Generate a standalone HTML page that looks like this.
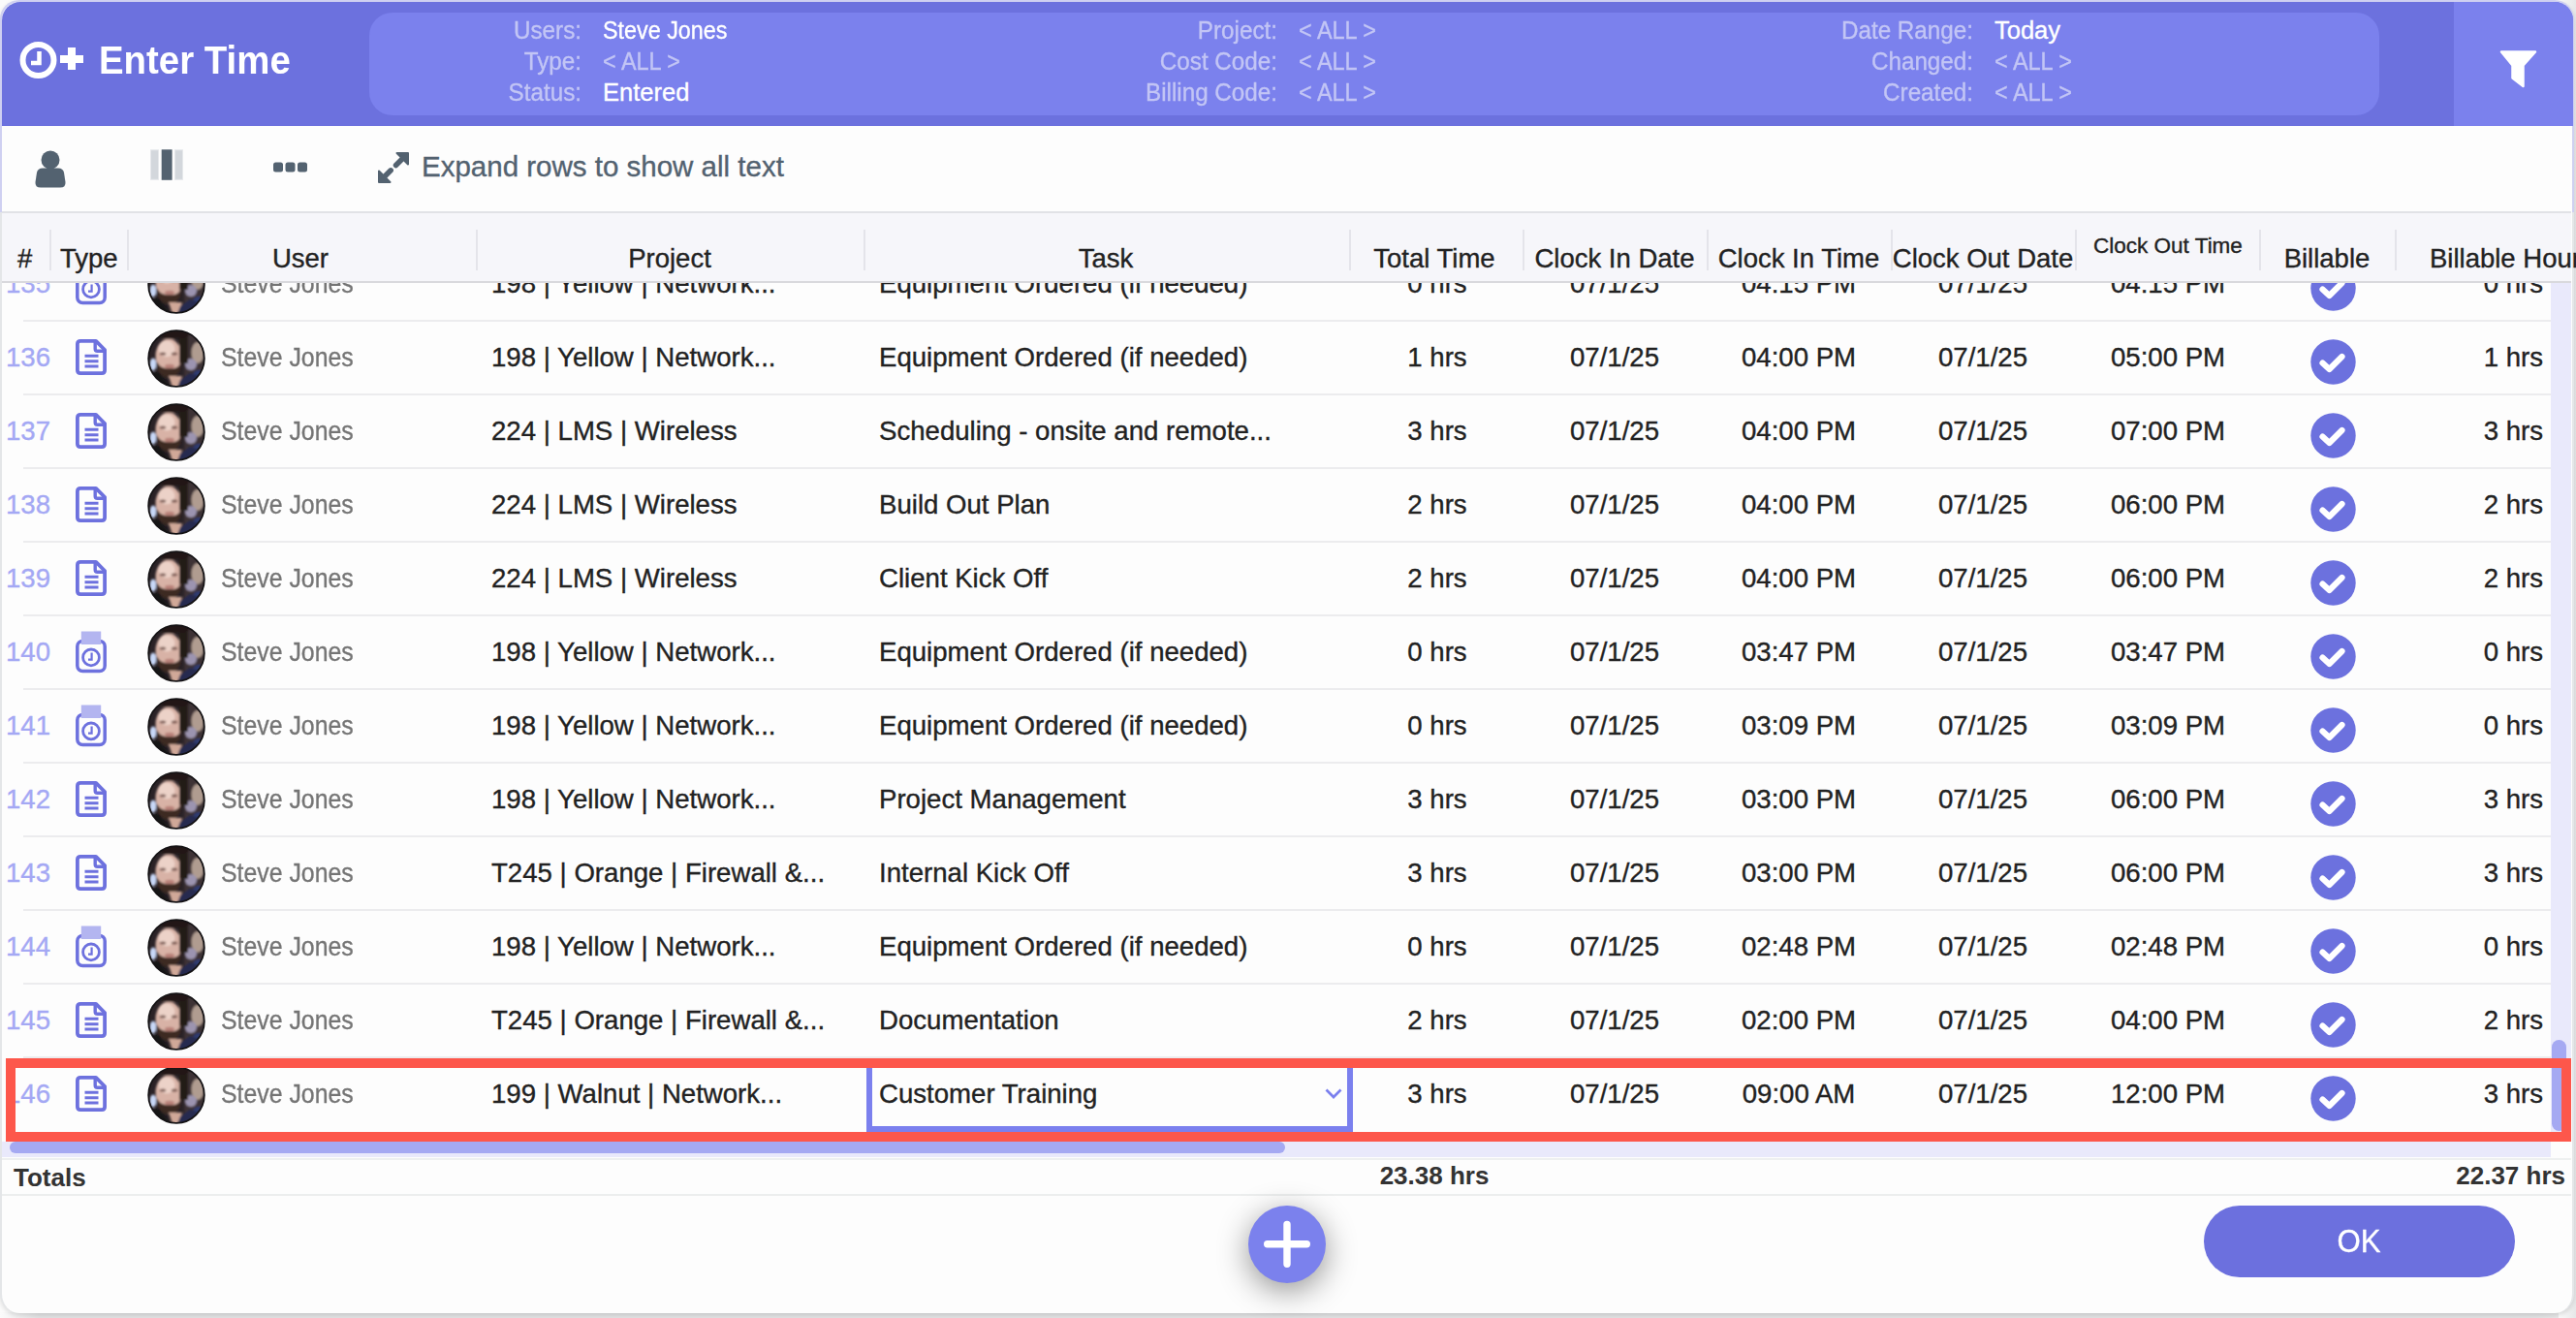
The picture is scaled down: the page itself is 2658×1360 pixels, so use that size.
<!DOCTYPE html><html><head><meta charset="utf-8"><style>
*{margin:0;padding:0;box-sizing:border-box}
html,body{width:2658px;height:1360px;overflow:hidden;background:#fbfbfb;font-family:"Liberation Sans",sans-serif}
.t{position:absolute;line-height:1;white-space:nowrap;-webkit-text-stroke:0.35px currentColor}
.abs{position:absolute}
#win{position:absolute;left:0;top:0;width:2656px;height:1355px;background:#fdfdfd;border-radius:20px;overflow:hidden;border-left:2.5px solid #e4e6e8;border-right:2.5px solid #e4e6e8;box-shadow:0 2px 5px rgba(0,0,0,0.13)}
</style></head><body>
<div class="abs" style="left:0;top:1354px;width:2658px;height:6px;background:linear-gradient(90deg,#fbfbfb 0,#e1e2e3 40px,#e1e2e3 2618px,#ececec 2658px)"></div>
<div class="abs" style="left:2640px;top:0;width:18px;height:1360px;background:linear-gradient(90deg,#fbfbfb,#e6e7e8)"></div>
<div id="win"></div>
<div class="abs" style="left:0;top:0;width:2656px;height:219px;border:2px solid #cfd0f1;border-bottom:none;border-radius:20px 20px 0 0"></div>
<div class="abs" style="left:1.5px;top:1.5px;width:2653px;height:128.5px;background:#6c71de;border-radius:19px 19px 0 0"></div>
<div class="abs" style="left:381px;top:13px;width:2074px;height:106px;background:#7b81ed;border-radius:24px"></div>
<div class="abs" style="left:2532px;top:1.5px;width:123px;height:128.5px;background:#7b81ed;border-radius:0 19px 0 0"></div>
<svg class="abs" style="left:18px;top:40px" width="72" height="44" viewBox="0 0 72 44">
<circle cx="21.5" cy="22" r="16" fill="none" stroke="#fff" stroke-width="6"/>
<path d="M22.5 13 V25 H14" fill="none" stroke="#fff" stroke-width="4.5"/>
<path d="M56 9 V32 M44 21 H68" stroke="#fff" stroke-width="8"/>
</svg>
<div class="t" style="left:102px;top:42.1px;font-size:40px;color:#fff;font-weight:700;-webkit-text-stroke:0;transform:scaleX(0.96);transform-origin:0 0">Enter Time</div>
<div class="t" style="left:-1400px;width:2000px;text-align:right;top:19.2px;font-size:25.5px;color:#c2c5f5;font-weight:400;transform:scaleX(0.95);transform-origin:100% 0">Users:</div>
<div class="t" style="left:622px;top:19.2px;font-size:25.5px;color:#fff;font-weight:400;transform:scaleX(0.915);transform-origin:0 0">Steve Jones</div>
<div class="t" style="left:-1400px;width:2000px;text-align:right;top:51.0px;font-size:25.5px;color:#c2c5f5;font-weight:400;transform:scaleX(0.95);transform-origin:100% 0">Type:</div>
<div class="t" style="left:622px;top:51.0px;font-size:25.5px;color:#c2c5f5;font-weight:400;transform:scaleX(0.92);transform-origin:0 0">&lt; ALL &gt;</div>
<div class="t" style="left:-1400px;width:2000px;text-align:right;top:82.8px;font-size:25.5px;color:#c2c5f5;font-weight:400;transform:scaleX(0.95);transform-origin:100% 0">Status:</div>
<div class="t" style="left:622px;top:82.8px;font-size:25.5px;color:#fff;font-weight:400;transform:scaleX(1.0);transform-origin:0 0">Entered</div>
<div class="t" style="left:-682px;width:2000px;text-align:right;top:19.2px;font-size:25.5px;color:#c2c5f5;font-weight:400;transform:scaleX(0.95);transform-origin:100% 0">Project:</div>
<div class="t" style="left:1340px;top:19.2px;font-size:25.5px;color:#c2c5f5;font-weight:400;transform:scaleX(0.92);transform-origin:0 0">&lt; ALL &gt;</div>
<div class="t" style="left:-682px;width:2000px;text-align:right;top:51.0px;font-size:25.5px;color:#c2c5f5;font-weight:400;transform:scaleX(0.95);transform-origin:100% 0">Cost Code:</div>
<div class="t" style="left:1340px;top:51.0px;font-size:25.5px;color:#c2c5f5;font-weight:400;transform:scaleX(0.92);transform-origin:0 0">&lt; ALL &gt;</div>
<div class="t" style="left:-682px;width:2000px;text-align:right;top:82.8px;font-size:25.5px;color:#c2c5f5;font-weight:400;transform:scaleX(0.95);transform-origin:100% 0">Billing Code:</div>
<div class="t" style="left:1340px;top:82.8px;font-size:25.5px;color:#c2c5f5;font-weight:400;transform:scaleX(0.92);transform-origin:0 0">&lt; ALL &gt;</div>
<div class="t" style="left:36px;width:2000px;text-align:right;top:19.2px;font-size:25.5px;color:#c2c5f5;font-weight:400;transform:scaleX(0.95);transform-origin:100% 0">Date Range:</div>
<div class="t" style="left:2058px;top:19.2px;font-size:25.5px;color:#fff;font-weight:400;transform:scaleX(1.0);transform-origin:0 0">Today</div>
<div class="t" style="left:36px;width:2000px;text-align:right;top:51.0px;font-size:25.5px;color:#c2c5f5;font-weight:400;transform:scaleX(0.95);transform-origin:100% 0">Changed:</div>
<div class="t" style="left:2058px;top:51.0px;font-size:25.5px;color:#c2c5f5;font-weight:400;transform:scaleX(0.92);transform-origin:0 0">&lt; ALL &gt;</div>
<div class="t" style="left:36px;width:2000px;text-align:right;top:82.8px;font-size:25.5px;color:#c2c5f5;font-weight:400;transform:scaleX(0.95);transform-origin:100% 0">Created:</div>
<div class="t" style="left:2058px;top:82.8px;font-size:25.5px;color:#c2c5f5;font-weight:400;transform:scaleX(0.92);transform-origin:0 0">&lt; ALL &gt;</div>
<svg class="abs" style="left:2578px;top:50px" width="42" height="42" viewBox="0 0 42 42">
<path d="M3 3.5 H38 L25.5 17.5 V39 L14.5 30.5 V17.5 Z" fill="#fff" stroke="#fff" stroke-width="2.5" stroke-linejoin="round"/>
</svg>
<div class="abs" style="left:2px;top:218px;width:2651px;height:2px;background:#e1e2e6"></div>
<svg class="abs" style="left:34px;top:152px" width="36" height="44" viewBox="0 0 36 44">
<circle cx="18" cy="13" r="9.5" fill="#536270"/>
<path d="M4 26 Q5 21.5 10 21.5 H26 Q31 21.5 32 26 L33.5 36 Q34 41.5 28 41.5 H8 Q2 41.5 2.5 36 Z" fill="#536270"/>
</svg>
<svg class="abs" style="left:154px;top:153px" width="36" height="34" viewBox="0 0 36 34">
<rect x="1.5" y="1.8" width="8" height="30.5" fill="#d3d7dc" stroke="#e6e8eb" stroke-width="1"/>
<rect x="12.7" y="1.3" width="10.9" height="31.5" fill="#536270"/>
<rect x="26.5" y="1.8" width="8" height="30.5" fill="#d3d7dc" stroke="#e6e8eb" stroke-width="1"/>
</svg>
<svg class="abs" style="left:281px;top:166px" width="38" height="14" viewBox="0 0 38 14">
<rect x="1" y="1.5" width="10" height="10" rx="2.5" fill="#536270"/>
<rect x="13.5" y="1.5" width="10" height="10" rx="2.5" fill="#536270"/>
<rect x="26" y="1.5" width="10" height="10" rx="2.5" fill="#536270"/>
</svg>
<svg class="abs" style="left:388px;top:155px" width="36" height="36" viewBox="0 0 36 36">
<path d="M21.5 3 H33 V14.5 Z" fill="#536270" stroke="#536270" stroke-width="2" stroke-linejoin="round"/>
<path d="M3 21.5 V33 H14.5 Z" fill="#536270" stroke="#536270" stroke-width="2" stroke-linejoin="round"/>
<path d="M28 8 L20.5 15.5 M8 28 L15.2 20.8" stroke="#536270" stroke-width="5.5" stroke-linecap="round"/>
</svg>
<div class="t" style="left:435px;top:157.0px;font-size:29.5px;color:#536270;font-weight:400;">Expand rows to show all text</div>
<div class="abs" style="left:2px;top:220px;width:2651px;height:71px;background:#f6f6fa"></div>
<div class="abs" style="left:2px;top:290px;width:2651px;height:2px;background:#d9d9dd"></div>
<div class="abs" style="left:51px;top:237px;width:2px;height:42px;background:#e4e4ea"></div>
<div class="abs" style="left:131px;top:237px;width:2px;height:42px;background:#e4e4ea"></div>
<div class="abs" style="left:491px;top:237px;width:2px;height:42px;background:#e4e4ea"></div>
<div class="abs" style="left:891px;top:237px;width:2px;height:42px;background:#e4e4ea"></div>
<div class="abs" style="left:1392px;top:237px;width:2px;height:42px;background:#e4e4ea"></div>
<div class="abs" style="left:1571px;top:237px;width:2px;height:42px;background:#e4e4ea"></div>
<div class="abs" style="left:1761px;top:237px;width:2px;height:42px;background:#e4e4ea"></div>
<div class="abs" style="left:1951px;top:237px;width:2px;height:42px;background:#e4e4ea"></div>
<div class="abs" style="left:2141px;top:237px;width:2px;height:42px;background:#e4e4ea"></div>
<div class="abs" style="left:2331px;top:237px;width:2px;height:42px;background:#e4e4ea"></div>
<div class="abs" style="left:2471px;top:237px;width:2px;height:42px;background:#e4e4ea"></div>
<div class="t" style="left:18px;top:252.7px;font-size:27.5px;color:#222;font-weight:400;">#</div>
<div class="t" style="left:62px;top:252.7px;font-size:27.5px;color:#222;font-weight:400;">Type</div>
<div class="t" style="left:-690px;width:2000px;text-align:center;top:252.7px;font-size:27.5px;color:#222;font-weight:400;">User</div>
<div class="t" style="left:-309px;width:2000px;text-align:center;top:252.7px;font-size:27.5px;color:#222;font-weight:400;">Project</div>
<div class="t" style="left:141px;width:2000px;text-align:center;top:252.7px;font-size:27.5px;color:#222;font-weight:400;">Task</div>
<div class="t" style="left:480px;width:2000px;text-align:center;top:252.7px;font-size:27.5px;color:#222;font-weight:400;">Total Time</div>
<div class="t" style="left:666px;width:2000px;text-align:center;top:252.7px;font-size:27.5px;color:#222;font-weight:400;">Clock In Date</div>
<div class="t" style="left:856px;width:2000px;text-align:center;top:252.7px;font-size:27.5px;color:#222;font-weight:400;">Clock In Time</div>
<div class="t" style="left:1046px;width:2000px;text-align:center;top:252.7px;font-size:27.5px;color:#222;font-weight:400;">Clock Out Date</div>
<div class="t" style="left:1237px;width:2000px;text-align:center;top:243.0px;font-size:22.5px;color:#222;font-weight:400;">Clock Out Time</div>
<div class="t" style="left:1401px;width:2000px;text-align:center;top:252.7px;font-size:27.5px;color:#222;font-weight:400;">Billable</div>
<div class="t" style="left:2507px;top:252.7px;font-size:27.5px;color:#222;font-weight:400;">Billable Hours</div>
<svg width="0" height="0" style="position:absolute"><defs>
<clipPath id="avc"><circle cx="30" cy="30" r="28.6"/></clipPath>
<filter id="avb" x="-20%" y="-20%" width="140%" height="140%"><feGaussianBlur stdDeviation="1.3"/></filter>
<g id="av"><g clip-path="url(#avc)">
<rect x="0" y="0" width="60" height="60" fill="#2a2226"/>
<g filter="url(#avb)">
<rect x="38" y="0" width="22" height="60" fill="#3e3234"/>
<ellipse cx="52" cy="24" rx="6.5" ry="11" fill="#b09c90"/>
<ellipse cx="45" cy="36" rx="6" ry="6" fill="#9c94b0"/>
<ellipse cx="53" cy="47" rx="6" ry="5" fill="#2e3a70"/>
<ellipse cx="6" cy="36" rx="3.5" ry="6.5" fill="#c8d8f8"/>
<ellipse cx="22" cy="27" rx="13.5" ry="17.5" fill="#d8b2a6"/>
<ellipse cx="20" cy="20" rx="8.5" ry="8.5" fill="#ecd2c8"/>
<rect x="33" y="3" width="9" height="32" fill="#231a18"/>
<ellipse cx="16" cy="25" rx="3.2" ry="1.5" fill="#7a5a52"/>
<ellipse cx="28" cy="25" rx="3.2" ry="1.5" fill="#7a5a52"/>
<path d="M9 33 Q10 49 23 50 Q35 49 36 30 L34 36 Q31 41 23 40 Q14 41 11 35 Z" fill="#3c2a24"/>
<ellipse cx="23" cy="38" rx="5" ry="2.2" fill="#b88078"/>
<ellipse cx="26" cy="4" rx="18" ry="5.5" fill="#201818"/>
<path d="M22 48 L36 48 L32 60 L26 60 Z" fill="#d0a898"/>
<path d="M0 44 L12 44 L25 60 L0 60 Z" fill="#141218"/>
<path d="M34 52 L44 45 L60 50 L60 60 L31 60 Z" fill="#262c50"/>
</g></g>
<circle cx="30" cy="30" r="28.8" fill="none" stroke="#141214" stroke-width="1.8"/>
</g></defs></svg>
<div class="abs" style="left:2px;top:292px;width:2630px;height:886px;overflow:hidden">
<div class="abs" style="left:-2px;top:-292px;width:2658px;height:1360px">
<div class="t" style="left:-1948px;width:2000px;text-align:right;top:278.6px;font-size:27.6px;color:#a4a8f4;font-weight:400;">135</div>
<svg class="abs" style="left:78px;top:271px" width="32" height="44" viewBox="0 0 32 44">
<rect x="1.8" y="10.5" width="28.4" height="31" rx="5.5" fill="none" stroke="#6d71de" stroke-width="3.5"/>
<rect x="5.8" y="0.5" width="20.4" height="13.5" fill="#b3b5f0"/>
<circle cx="16" cy="27.4" r="8.4" fill="none" stroke="#6d71de" stroke-width="2.8"/>
<path d="M16.6 22.5 V29.6 H13" fill="none" stroke="#6d71de" stroke-width="2.2"/>
</svg>
<svg class="abs" style="left:152px;top:263.5px" width="60" height="60" viewBox="0 0 60 60"><use href="#av"/></svg>
<div class="t" style="left:228px;top:278.6px;font-size:27.6px;color:#757575;font-weight:400;transform:scaleX(0.9);transform-origin:0 0">Steve Jones</div>
<div class="t" style="left:507px;top:278.6px;font-size:27.6px;color:#222;font-weight:400;">198 | Yellow | Network...</div>
<div class="t" style="left:907px;top:278.6px;font-size:27.6px;color:#222;font-weight:400;">Equipment Ordered (if needed)</div>
<div class="t" style="left:483px;width:2000px;text-align:center;top:278.6px;font-size:27.6px;color:#222;font-weight:400;">0 hrs</div>
<div class="t" style="left:666px;width:2000px;text-align:center;top:278.6px;font-size:27.6px;color:#222;font-weight:400;">07/1/25</div>
<div class="t" style="left:856px;width:2000px;text-align:center;top:278.6px;font-size:27.6px;color:#222;font-weight:400;">04:15 PM</div>
<div class="t" style="left:1046px;width:2000px;text-align:center;top:278.6px;font-size:27.6px;color:#222;font-weight:400;">07/1/25</div>
<div class="t" style="left:1237px;width:2000px;text-align:center;top:278.6px;font-size:27.6px;color:#222;font-weight:400;">04:15 PM</div>
<svg class="abs" style="left:2384px;top:273.5px" width="47" height="47" viewBox="0 0 47 47">
<circle cx="23.5" cy="23.5" r="23.2" fill="#6c71de"/>
<path d="M12.5 24.5 L19.5 31 L32.5 18" fill="none" stroke="#fff" stroke-width="6.2" stroke-linecap="round" stroke-linejoin="round"/>
</svg>
<div class="t" style="left:624px;width:2000px;text-align:right;top:278.6px;font-size:27.6px;color:#222;font-weight:400;">0 hrs</div>
<div class="abs" style="left:24px;top:330px;width:2608px;height:2px;background:#ececee"></div>
<div class="t" style="left:-1948px;width:2000px;text-align:right;top:354.6px;font-size:27.6px;color:#a4a8f4;font-weight:400;">136</div>
<svg class="abs" style="left:78px;top:350px" width="32" height="38" viewBox="0 0 32 38">
<path d="M1.9 5 Q1.9 1.9 5 1.9 H21 L30.1 11 V32 Q30.1 35.2 27 35.2 H5 Q1.9 35.2 1.9 32 Z" fill="none" stroke="#6d71de" stroke-width="3.8" stroke-linejoin="round"/>
<path d="M20.2 2.5 V10 Q20.2 12.3 22.5 12.3 H29.5" fill="none" stroke="#6d71de" stroke-width="3.4"/>
<path d="M9.5 17.3 H23.5 M9.5 22.8 H23.5 M9.5 28 H23.5" stroke="#6d71de" stroke-width="3"/>
</svg>
<svg class="abs" style="left:152px;top:339.5px" width="60" height="60" viewBox="0 0 60 60"><use href="#av"/></svg>
<div class="t" style="left:228px;top:354.6px;font-size:27.6px;color:#757575;font-weight:400;transform:scaleX(0.9);transform-origin:0 0">Steve Jones</div>
<div class="t" style="left:507px;top:354.6px;font-size:27.6px;color:#222;font-weight:400;">198 | Yellow | Network...</div>
<div class="t" style="left:907px;top:354.6px;font-size:27.6px;color:#222;font-weight:400;">Equipment Ordered (if needed)</div>
<div class="t" style="left:483px;width:2000px;text-align:center;top:354.6px;font-size:27.6px;color:#222;font-weight:400;">1 hrs</div>
<div class="t" style="left:666px;width:2000px;text-align:center;top:354.6px;font-size:27.6px;color:#222;font-weight:400;">07/1/25</div>
<div class="t" style="left:856px;width:2000px;text-align:center;top:354.6px;font-size:27.6px;color:#222;font-weight:400;">04:00 PM</div>
<div class="t" style="left:1046px;width:2000px;text-align:center;top:354.6px;font-size:27.6px;color:#222;font-weight:400;">07/1/25</div>
<div class="t" style="left:1237px;width:2000px;text-align:center;top:354.6px;font-size:27.6px;color:#222;font-weight:400;">05:00 PM</div>
<svg class="abs" style="left:2384px;top:349.5px" width="47" height="47" viewBox="0 0 47 47">
<circle cx="23.5" cy="23.5" r="23.2" fill="#6c71de"/>
<path d="M12.5 24.5 L19.5 31 L32.5 18" fill="none" stroke="#fff" stroke-width="6.2" stroke-linecap="round" stroke-linejoin="round"/>
</svg>
<div class="t" style="left:624px;width:2000px;text-align:right;top:354.6px;font-size:27.6px;color:#222;font-weight:400;">1 hrs</div>
<div class="abs" style="left:24px;top:406px;width:2608px;height:2px;background:#ececee"></div>
<div class="t" style="left:-1948px;width:2000px;text-align:right;top:430.6px;font-size:27.6px;color:#a4a8f4;font-weight:400;">137</div>
<svg class="abs" style="left:78px;top:426px" width="32" height="38" viewBox="0 0 32 38">
<path d="M1.9 5 Q1.9 1.9 5 1.9 H21 L30.1 11 V32 Q30.1 35.2 27 35.2 H5 Q1.9 35.2 1.9 32 Z" fill="none" stroke="#6d71de" stroke-width="3.8" stroke-linejoin="round"/>
<path d="M20.2 2.5 V10 Q20.2 12.3 22.5 12.3 H29.5" fill="none" stroke="#6d71de" stroke-width="3.4"/>
<path d="M9.5 17.3 H23.5 M9.5 22.8 H23.5 M9.5 28 H23.5" stroke="#6d71de" stroke-width="3"/>
</svg>
<svg class="abs" style="left:152px;top:415.5px" width="60" height="60" viewBox="0 0 60 60"><use href="#av"/></svg>
<div class="t" style="left:228px;top:430.6px;font-size:27.6px;color:#757575;font-weight:400;transform:scaleX(0.9);transform-origin:0 0">Steve Jones</div>
<div class="t" style="left:507px;top:430.6px;font-size:27.6px;color:#222;font-weight:400;">224 | LMS | Wireless</div>
<div class="t" style="left:907px;top:430.6px;font-size:27.6px;color:#222;font-weight:400;">Scheduling - onsite and remote...</div>
<div class="t" style="left:483px;width:2000px;text-align:center;top:430.6px;font-size:27.6px;color:#222;font-weight:400;">3 hrs</div>
<div class="t" style="left:666px;width:2000px;text-align:center;top:430.6px;font-size:27.6px;color:#222;font-weight:400;">07/1/25</div>
<div class="t" style="left:856px;width:2000px;text-align:center;top:430.6px;font-size:27.6px;color:#222;font-weight:400;">04:00 PM</div>
<div class="t" style="left:1046px;width:2000px;text-align:center;top:430.6px;font-size:27.6px;color:#222;font-weight:400;">07/1/25</div>
<div class="t" style="left:1237px;width:2000px;text-align:center;top:430.6px;font-size:27.6px;color:#222;font-weight:400;">07:00 PM</div>
<svg class="abs" style="left:2384px;top:425.5px" width="47" height="47" viewBox="0 0 47 47">
<circle cx="23.5" cy="23.5" r="23.2" fill="#6c71de"/>
<path d="M12.5 24.5 L19.5 31 L32.5 18" fill="none" stroke="#fff" stroke-width="6.2" stroke-linecap="round" stroke-linejoin="round"/>
</svg>
<div class="t" style="left:624px;width:2000px;text-align:right;top:430.6px;font-size:27.6px;color:#222;font-weight:400;">3 hrs</div>
<div class="abs" style="left:24px;top:482px;width:2608px;height:2px;background:#ececee"></div>
<div class="t" style="left:-1948px;width:2000px;text-align:right;top:506.6px;font-size:27.6px;color:#a4a8f4;font-weight:400;">138</div>
<svg class="abs" style="left:78px;top:502px" width="32" height="38" viewBox="0 0 32 38">
<path d="M1.9 5 Q1.9 1.9 5 1.9 H21 L30.1 11 V32 Q30.1 35.2 27 35.2 H5 Q1.9 35.2 1.9 32 Z" fill="none" stroke="#6d71de" stroke-width="3.8" stroke-linejoin="round"/>
<path d="M20.2 2.5 V10 Q20.2 12.3 22.5 12.3 H29.5" fill="none" stroke="#6d71de" stroke-width="3.4"/>
<path d="M9.5 17.3 H23.5 M9.5 22.8 H23.5 M9.5 28 H23.5" stroke="#6d71de" stroke-width="3"/>
</svg>
<svg class="abs" style="left:152px;top:491.5px" width="60" height="60" viewBox="0 0 60 60"><use href="#av"/></svg>
<div class="t" style="left:228px;top:506.6px;font-size:27.6px;color:#757575;font-weight:400;transform:scaleX(0.9);transform-origin:0 0">Steve Jones</div>
<div class="t" style="left:507px;top:506.6px;font-size:27.6px;color:#222;font-weight:400;">224 | LMS | Wireless</div>
<div class="t" style="left:907px;top:506.6px;font-size:27.6px;color:#222;font-weight:400;">Build Out Plan</div>
<div class="t" style="left:483px;width:2000px;text-align:center;top:506.6px;font-size:27.6px;color:#222;font-weight:400;">2 hrs</div>
<div class="t" style="left:666px;width:2000px;text-align:center;top:506.6px;font-size:27.6px;color:#222;font-weight:400;">07/1/25</div>
<div class="t" style="left:856px;width:2000px;text-align:center;top:506.6px;font-size:27.6px;color:#222;font-weight:400;">04:00 PM</div>
<div class="t" style="left:1046px;width:2000px;text-align:center;top:506.6px;font-size:27.6px;color:#222;font-weight:400;">07/1/25</div>
<div class="t" style="left:1237px;width:2000px;text-align:center;top:506.6px;font-size:27.6px;color:#222;font-weight:400;">06:00 PM</div>
<svg class="abs" style="left:2384px;top:501.5px" width="47" height="47" viewBox="0 0 47 47">
<circle cx="23.5" cy="23.5" r="23.2" fill="#6c71de"/>
<path d="M12.5 24.5 L19.5 31 L32.5 18" fill="none" stroke="#fff" stroke-width="6.2" stroke-linecap="round" stroke-linejoin="round"/>
</svg>
<div class="t" style="left:624px;width:2000px;text-align:right;top:506.6px;font-size:27.6px;color:#222;font-weight:400;">2 hrs</div>
<div class="abs" style="left:24px;top:558px;width:2608px;height:2px;background:#ececee"></div>
<div class="t" style="left:-1948px;width:2000px;text-align:right;top:582.6px;font-size:27.6px;color:#a4a8f4;font-weight:400;">139</div>
<svg class="abs" style="left:78px;top:578px" width="32" height="38" viewBox="0 0 32 38">
<path d="M1.9 5 Q1.9 1.9 5 1.9 H21 L30.1 11 V32 Q30.1 35.2 27 35.2 H5 Q1.9 35.2 1.9 32 Z" fill="none" stroke="#6d71de" stroke-width="3.8" stroke-linejoin="round"/>
<path d="M20.2 2.5 V10 Q20.2 12.3 22.5 12.3 H29.5" fill="none" stroke="#6d71de" stroke-width="3.4"/>
<path d="M9.5 17.3 H23.5 M9.5 22.8 H23.5 M9.5 28 H23.5" stroke="#6d71de" stroke-width="3"/>
</svg>
<svg class="abs" style="left:152px;top:567.5px" width="60" height="60" viewBox="0 0 60 60"><use href="#av"/></svg>
<div class="t" style="left:228px;top:582.6px;font-size:27.6px;color:#757575;font-weight:400;transform:scaleX(0.9);transform-origin:0 0">Steve Jones</div>
<div class="t" style="left:507px;top:582.6px;font-size:27.6px;color:#222;font-weight:400;">224 | LMS | Wireless</div>
<div class="t" style="left:907px;top:582.6px;font-size:27.6px;color:#222;font-weight:400;">Client Kick Off</div>
<div class="t" style="left:483px;width:2000px;text-align:center;top:582.6px;font-size:27.6px;color:#222;font-weight:400;">2 hrs</div>
<div class="t" style="left:666px;width:2000px;text-align:center;top:582.6px;font-size:27.6px;color:#222;font-weight:400;">07/1/25</div>
<div class="t" style="left:856px;width:2000px;text-align:center;top:582.6px;font-size:27.6px;color:#222;font-weight:400;">04:00 PM</div>
<div class="t" style="left:1046px;width:2000px;text-align:center;top:582.6px;font-size:27.6px;color:#222;font-weight:400;">07/1/25</div>
<div class="t" style="left:1237px;width:2000px;text-align:center;top:582.6px;font-size:27.6px;color:#222;font-weight:400;">06:00 PM</div>
<svg class="abs" style="left:2384px;top:577.5px" width="47" height="47" viewBox="0 0 47 47">
<circle cx="23.5" cy="23.5" r="23.2" fill="#6c71de"/>
<path d="M12.5 24.5 L19.5 31 L32.5 18" fill="none" stroke="#fff" stroke-width="6.2" stroke-linecap="round" stroke-linejoin="round"/>
</svg>
<div class="t" style="left:624px;width:2000px;text-align:right;top:582.6px;font-size:27.6px;color:#222;font-weight:400;">2 hrs</div>
<div class="abs" style="left:24px;top:634px;width:2608px;height:2px;background:#ececee"></div>
<div class="t" style="left:-1948px;width:2000px;text-align:right;top:658.6px;font-size:27.6px;color:#a4a8f4;font-weight:400;">140</div>
<svg class="abs" style="left:78px;top:651px" width="32" height="44" viewBox="0 0 32 44">
<rect x="1.8" y="10.5" width="28.4" height="31" rx="5.5" fill="none" stroke="#6d71de" stroke-width="3.5"/>
<rect x="5.8" y="0.5" width="20.4" height="13.5" fill="#b3b5f0"/>
<circle cx="16" cy="27.4" r="8.4" fill="none" stroke="#6d71de" stroke-width="2.8"/>
<path d="M16.6 22.5 V29.6 H13" fill="none" stroke="#6d71de" stroke-width="2.2"/>
</svg>
<svg class="abs" style="left:152px;top:643.5px" width="60" height="60" viewBox="0 0 60 60"><use href="#av"/></svg>
<div class="t" style="left:228px;top:658.6px;font-size:27.6px;color:#757575;font-weight:400;transform:scaleX(0.9);transform-origin:0 0">Steve Jones</div>
<div class="t" style="left:507px;top:658.6px;font-size:27.6px;color:#222;font-weight:400;">198 | Yellow | Network...</div>
<div class="t" style="left:907px;top:658.6px;font-size:27.6px;color:#222;font-weight:400;">Equipment Ordered (if needed)</div>
<div class="t" style="left:483px;width:2000px;text-align:center;top:658.6px;font-size:27.6px;color:#222;font-weight:400;">0 hrs</div>
<div class="t" style="left:666px;width:2000px;text-align:center;top:658.6px;font-size:27.6px;color:#222;font-weight:400;">07/1/25</div>
<div class="t" style="left:856px;width:2000px;text-align:center;top:658.6px;font-size:27.6px;color:#222;font-weight:400;">03:47 PM</div>
<div class="t" style="left:1046px;width:2000px;text-align:center;top:658.6px;font-size:27.6px;color:#222;font-weight:400;">07/1/25</div>
<div class="t" style="left:1237px;width:2000px;text-align:center;top:658.6px;font-size:27.6px;color:#222;font-weight:400;">03:47 PM</div>
<svg class="abs" style="left:2384px;top:653.5px" width="47" height="47" viewBox="0 0 47 47">
<circle cx="23.5" cy="23.5" r="23.2" fill="#6c71de"/>
<path d="M12.5 24.5 L19.5 31 L32.5 18" fill="none" stroke="#fff" stroke-width="6.2" stroke-linecap="round" stroke-linejoin="round"/>
</svg>
<div class="t" style="left:624px;width:2000px;text-align:right;top:658.6px;font-size:27.6px;color:#222;font-weight:400;">0 hrs</div>
<div class="abs" style="left:24px;top:710px;width:2608px;height:2px;background:#ececee"></div>
<div class="t" style="left:-1948px;width:2000px;text-align:right;top:734.6px;font-size:27.6px;color:#a4a8f4;font-weight:400;">141</div>
<svg class="abs" style="left:78px;top:727px" width="32" height="44" viewBox="0 0 32 44">
<rect x="1.8" y="10.5" width="28.4" height="31" rx="5.5" fill="none" stroke="#6d71de" stroke-width="3.5"/>
<rect x="5.8" y="0.5" width="20.4" height="13.5" fill="#b3b5f0"/>
<circle cx="16" cy="27.4" r="8.4" fill="none" stroke="#6d71de" stroke-width="2.8"/>
<path d="M16.6 22.5 V29.6 H13" fill="none" stroke="#6d71de" stroke-width="2.2"/>
</svg>
<svg class="abs" style="left:152px;top:719.5px" width="60" height="60" viewBox="0 0 60 60"><use href="#av"/></svg>
<div class="t" style="left:228px;top:734.6px;font-size:27.6px;color:#757575;font-weight:400;transform:scaleX(0.9);transform-origin:0 0">Steve Jones</div>
<div class="t" style="left:507px;top:734.6px;font-size:27.6px;color:#222;font-weight:400;">198 | Yellow | Network...</div>
<div class="t" style="left:907px;top:734.6px;font-size:27.6px;color:#222;font-weight:400;">Equipment Ordered (if needed)</div>
<div class="t" style="left:483px;width:2000px;text-align:center;top:734.6px;font-size:27.6px;color:#222;font-weight:400;">0 hrs</div>
<div class="t" style="left:666px;width:2000px;text-align:center;top:734.6px;font-size:27.6px;color:#222;font-weight:400;">07/1/25</div>
<div class="t" style="left:856px;width:2000px;text-align:center;top:734.6px;font-size:27.6px;color:#222;font-weight:400;">03:09 PM</div>
<div class="t" style="left:1046px;width:2000px;text-align:center;top:734.6px;font-size:27.6px;color:#222;font-weight:400;">07/1/25</div>
<div class="t" style="left:1237px;width:2000px;text-align:center;top:734.6px;font-size:27.6px;color:#222;font-weight:400;">03:09 PM</div>
<svg class="abs" style="left:2384px;top:729.5px" width="47" height="47" viewBox="0 0 47 47">
<circle cx="23.5" cy="23.5" r="23.2" fill="#6c71de"/>
<path d="M12.5 24.5 L19.5 31 L32.5 18" fill="none" stroke="#fff" stroke-width="6.2" stroke-linecap="round" stroke-linejoin="round"/>
</svg>
<div class="t" style="left:624px;width:2000px;text-align:right;top:734.6px;font-size:27.6px;color:#222;font-weight:400;">0 hrs</div>
<div class="abs" style="left:24px;top:786px;width:2608px;height:2px;background:#ececee"></div>
<div class="t" style="left:-1948px;width:2000px;text-align:right;top:810.6px;font-size:27.6px;color:#a4a8f4;font-weight:400;">142</div>
<svg class="abs" style="left:78px;top:806px" width="32" height="38" viewBox="0 0 32 38">
<path d="M1.9 5 Q1.9 1.9 5 1.9 H21 L30.1 11 V32 Q30.1 35.2 27 35.2 H5 Q1.9 35.2 1.9 32 Z" fill="none" stroke="#6d71de" stroke-width="3.8" stroke-linejoin="round"/>
<path d="M20.2 2.5 V10 Q20.2 12.3 22.5 12.3 H29.5" fill="none" stroke="#6d71de" stroke-width="3.4"/>
<path d="M9.5 17.3 H23.5 M9.5 22.8 H23.5 M9.5 28 H23.5" stroke="#6d71de" stroke-width="3"/>
</svg>
<svg class="abs" style="left:152px;top:795.5px" width="60" height="60" viewBox="0 0 60 60"><use href="#av"/></svg>
<div class="t" style="left:228px;top:810.6px;font-size:27.6px;color:#757575;font-weight:400;transform:scaleX(0.9);transform-origin:0 0">Steve Jones</div>
<div class="t" style="left:507px;top:810.6px;font-size:27.6px;color:#222;font-weight:400;">198 | Yellow | Network...</div>
<div class="t" style="left:907px;top:810.6px;font-size:27.6px;color:#222;font-weight:400;">Project Management</div>
<div class="t" style="left:483px;width:2000px;text-align:center;top:810.6px;font-size:27.6px;color:#222;font-weight:400;">3 hrs</div>
<div class="t" style="left:666px;width:2000px;text-align:center;top:810.6px;font-size:27.6px;color:#222;font-weight:400;">07/1/25</div>
<div class="t" style="left:856px;width:2000px;text-align:center;top:810.6px;font-size:27.6px;color:#222;font-weight:400;">03:00 PM</div>
<div class="t" style="left:1046px;width:2000px;text-align:center;top:810.6px;font-size:27.6px;color:#222;font-weight:400;">07/1/25</div>
<div class="t" style="left:1237px;width:2000px;text-align:center;top:810.6px;font-size:27.6px;color:#222;font-weight:400;">06:00 PM</div>
<svg class="abs" style="left:2384px;top:805.5px" width="47" height="47" viewBox="0 0 47 47">
<circle cx="23.5" cy="23.5" r="23.2" fill="#6c71de"/>
<path d="M12.5 24.5 L19.5 31 L32.5 18" fill="none" stroke="#fff" stroke-width="6.2" stroke-linecap="round" stroke-linejoin="round"/>
</svg>
<div class="t" style="left:624px;width:2000px;text-align:right;top:810.6px;font-size:27.6px;color:#222;font-weight:400;">3 hrs</div>
<div class="abs" style="left:24px;top:862px;width:2608px;height:2px;background:#ececee"></div>
<div class="t" style="left:-1948px;width:2000px;text-align:right;top:886.6px;font-size:27.6px;color:#a4a8f4;font-weight:400;">143</div>
<svg class="abs" style="left:78px;top:882px" width="32" height="38" viewBox="0 0 32 38">
<path d="M1.9 5 Q1.9 1.9 5 1.9 H21 L30.1 11 V32 Q30.1 35.2 27 35.2 H5 Q1.9 35.2 1.9 32 Z" fill="none" stroke="#6d71de" stroke-width="3.8" stroke-linejoin="round"/>
<path d="M20.2 2.5 V10 Q20.2 12.3 22.5 12.3 H29.5" fill="none" stroke="#6d71de" stroke-width="3.4"/>
<path d="M9.5 17.3 H23.5 M9.5 22.8 H23.5 M9.5 28 H23.5" stroke="#6d71de" stroke-width="3"/>
</svg>
<svg class="abs" style="left:152px;top:871.5px" width="60" height="60" viewBox="0 0 60 60"><use href="#av"/></svg>
<div class="t" style="left:228px;top:886.6px;font-size:27.6px;color:#757575;font-weight:400;transform:scaleX(0.9);transform-origin:0 0">Steve Jones</div>
<div class="t" style="left:507px;top:886.6px;font-size:27.6px;color:#222;font-weight:400;">T245 | Orange | Firewall &amp;...</div>
<div class="t" style="left:907px;top:886.6px;font-size:27.6px;color:#222;font-weight:400;">Internal Kick Off</div>
<div class="t" style="left:483px;width:2000px;text-align:center;top:886.6px;font-size:27.6px;color:#222;font-weight:400;">3 hrs</div>
<div class="t" style="left:666px;width:2000px;text-align:center;top:886.6px;font-size:27.6px;color:#222;font-weight:400;">07/1/25</div>
<div class="t" style="left:856px;width:2000px;text-align:center;top:886.6px;font-size:27.6px;color:#222;font-weight:400;">03:00 PM</div>
<div class="t" style="left:1046px;width:2000px;text-align:center;top:886.6px;font-size:27.6px;color:#222;font-weight:400;">07/1/25</div>
<div class="t" style="left:1237px;width:2000px;text-align:center;top:886.6px;font-size:27.6px;color:#222;font-weight:400;">06:00 PM</div>
<svg class="abs" style="left:2384px;top:881.5px" width="47" height="47" viewBox="0 0 47 47">
<circle cx="23.5" cy="23.5" r="23.2" fill="#6c71de"/>
<path d="M12.5 24.5 L19.5 31 L32.5 18" fill="none" stroke="#fff" stroke-width="6.2" stroke-linecap="round" stroke-linejoin="round"/>
</svg>
<div class="t" style="left:624px;width:2000px;text-align:right;top:886.6px;font-size:27.6px;color:#222;font-weight:400;">3 hrs</div>
<div class="abs" style="left:24px;top:938px;width:2608px;height:2px;background:#ececee"></div>
<div class="t" style="left:-1948px;width:2000px;text-align:right;top:962.6px;font-size:27.6px;color:#a4a8f4;font-weight:400;">144</div>
<svg class="abs" style="left:78px;top:955px" width="32" height="44" viewBox="0 0 32 44">
<rect x="1.8" y="10.5" width="28.4" height="31" rx="5.5" fill="none" stroke="#6d71de" stroke-width="3.5"/>
<rect x="5.8" y="0.5" width="20.4" height="13.5" fill="#b3b5f0"/>
<circle cx="16" cy="27.4" r="8.4" fill="none" stroke="#6d71de" stroke-width="2.8"/>
<path d="M16.6 22.5 V29.6 H13" fill="none" stroke="#6d71de" stroke-width="2.2"/>
</svg>
<svg class="abs" style="left:152px;top:947.5px" width="60" height="60" viewBox="0 0 60 60"><use href="#av"/></svg>
<div class="t" style="left:228px;top:962.6px;font-size:27.6px;color:#757575;font-weight:400;transform:scaleX(0.9);transform-origin:0 0">Steve Jones</div>
<div class="t" style="left:507px;top:962.6px;font-size:27.6px;color:#222;font-weight:400;">198 | Yellow | Network...</div>
<div class="t" style="left:907px;top:962.6px;font-size:27.6px;color:#222;font-weight:400;">Equipment Ordered (if needed)</div>
<div class="t" style="left:483px;width:2000px;text-align:center;top:962.6px;font-size:27.6px;color:#222;font-weight:400;">0 hrs</div>
<div class="t" style="left:666px;width:2000px;text-align:center;top:962.6px;font-size:27.6px;color:#222;font-weight:400;">07/1/25</div>
<div class="t" style="left:856px;width:2000px;text-align:center;top:962.6px;font-size:27.6px;color:#222;font-weight:400;">02:48 PM</div>
<div class="t" style="left:1046px;width:2000px;text-align:center;top:962.6px;font-size:27.6px;color:#222;font-weight:400;">07/1/25</div>
<div class="t" style="left:1237px;width:2000px;text-align:center;top:962.6px;font-size:27.6px;color:#222;font-weight:400;">02:48 PM</div>
<svg class="abs" style="left:2384px;top:957.5px" width="47" height="47" viewBox="0 0 47 47">
<circle cx="23.5" cy="23.5" r="23.2" fill="#6c71de"/>
<path d="M12.5 24.5 L19.5 31 L32.5 18" fill="none" stroke="#fff" stroke-width="6.2" stroke-linecap="round" stroke-linejoin="round"/>
</svg>
<div class="t" style="left:624px;width:2000px;text-align:right;top:962.6px;font-size:27.6px;color:#222;font-weight:400;">0 hrs</div>
<div class="abs" style="left:24px;top:1014px;width:2608px;height:2px;background:#ececee"></div>
<div class="t" style="left:-1948px;width:2000px;text-align:right;top:1038.6px;font-size:27.6px;color:#a4a8f4;font-weight:400;">145</div>
<svg class="abs" style="left:78px;top:1034px" width="32" height="38" viewBox="0 0 32 38">
<path d="M1.9 5 Q1.9 1.9 5 1.9 H21 L30.1 11 V32 Q30.1 35.2 27 35.2 H5 Q1.9 35.2 1.9 32 Z" fill="none" stroke="#6d71de" stroke-width="3.8" stroke-linejoin="round"/>
<path d="M20.2 2.5 V10 Q20.2 12.3 22.5 12.3 H29.5" fill="none" stroke="#6d71de" stroke-width="3.4"/>
<path d="M9.5 17.3 H23.5 M9.5 22.8 H23.5 M9.5 28 H23.5" stroke="#6d71de" stroke-width="3"/>
</svg>
<svg class="abs" style="left:152px;top:1023.5px" width="60" height="60" viewBox="0 0 60 60"><use href="#av"/></svg>
<div class="t" style="left:228px;top:1038.6px;font-size:27.6px;color:#757575;font-weight:400;transform:scaleX(0.9);transform-origin:0 0">Steve Jones</div>
<div class="t" style="left:507px;top:1038.6px;font-size:27.6px;color:#222;font-weight:400;">T245 | Orange | Firewall &amp;...</div>
<div class="t" style="left:907px;top:1038.6px;font-size:27.6px;color:#222;font-weight:400;">Documentation</div>
<div class="t" style="left:483px;width:2000px;text-align:center;top:1038.6px;font-size:27.6px;color:#222;font-weight:400;">2 hrs</div>
<div class="t" style="left:666px;width:2000px;text-align:center;top:1038.6px;font-size:27.6px;color:#222;font-weight:400;">07/1/25</div>
<div class="t" style="left:856px;width:2000px;text-align:center;top:1038.6px;font-size:27.6px;color:#222;font-weight:400;">02:00 PM</div>
<div class="t" style="left:1046px;width:2000px;text-align:center;top:1038.6px;font-size:27.6px;color:#222;font-weight:400;">07/1/25</div>
<div class="t" style="left:1237px;width:2000px;text-align:center;top:1038.6px;font-size:27.6px;color:#222;font-weight:400;">04:00 PM</div>
<svg class="abs" style="left:2384px;top:1033.5px" width="47" height="47" viewBox="0 0 47 47">
<circle cx="23.5" cy="23.5" r="23.2" fill="#6c71de"/>
<path d="M12.5 24.5 L19.5 31 L32.5 18" fill="none" stroke="#fff" stroke-width="6.2" stroke-linecap="round" stroke-linejoin="round"/>
</svg>
<div class="t" style="left:624px;width:2000px;text-align:right;top:1038.6px;font-size:27.6px;color:#222;font-weight:400;">2 hrs</div>
<div class="abs" style="left:24px;top:1090px;width:2608px;height:2px;background:#ececee"></div>
<div class="t" style="left:-1948px;width:2000px;text-align:right;top:1114.6px;font-size:27.6px;color:#a4a8f4;font-weight:400;">146</div>
<svg class="abs" style="left:78px;top:1110px" width="32" height="38" viewBox="0 0 32 38">
<path d="M1.9 5 Q1.9 1.9 5 1.9 H21 L30.1 11 V32 Q30.1 35.2 27 35.2 H5 Q1.9 35.2 1.9 32 Z" fill="none" stroke="#6d71de" stroke-width="3.8" stroke-linejoin="round"/>
<path d="M20.2 2.5 V10 Q20.2 12.3 22.5 12.3 H29.5" fill="none" stroke="#6d71de" stroke-width="3.4"/>
<path d="M9.5 17.3 H23.5 M9.5 22.8 H23.5 M9.5 28 H23.5" stroke="#6d71de" stroke-width="3"/>
</svg>
<svg class="abs" style="left:152px;top:1099.5px" width="60" height="60" viewBox="0 0 60 60"><use href="#av"/></svg>
<div class="t" style="left:228px;top:1114.6px;font-size:27.6px;color:#757575;font-weight:400;transform:scaleX(0.9);transform-origin:0 0">Steve Jones</div>
<div class="t" style="left:507px;top:1114.6px;font-size:27.6px;color:#222;font-weight:400;">199 | Walnut | Network...</div>
<div class="t" style="left:483px;width:2000px;text-align:center;top:1114.6px;font-size:27.6px;color:#222;font-weight:400;">3 hrs</div>
<div class="t" style="left:666px;width:2000px;text-align:center;top:1114.6px;font-size:27.6px;color:#222;font-weight:400;">07/1/25</div>
<div class="t" style="left:856px;width:2000px;text-align:center;top:1114.6px;font-size:27.6px;color:#222;font-weight:400;">09:00 AM</div>
<div class="t" style="left:1046px;width:2000px;text-align:center;top:1114.6px;font-size:27.6px;color:#222;font-weight:400;">07/1/25</div>
<div class="t" style="left:1237px;width:2000px;text-align:center;top:1114.6px;font-size:27.6px;color:#222;font-weight:400;">12:00 PM</div>
<svg class="abs" style="left:2384px;top:1109.5px" width="47" height="47" viewBox="0 0 47 47">
<circle cx="23.5" cy="23.5" r="23.2" fill="#6c71de"/>
<path d="M12.5 24.5 L19.5 31 L32.5 18" fill="none" stroke="#fff" stroke-width="6.2" stroke-linecap="round" stroke-linejoin="round"/>
</svg>
<div class="t" style="left:624px;width:2000px;text-align:right;top:1114.6px;font-size:27.6px;color:#222;font-weight:400;">3 hrs</div>
</div></div>
<div class="abs" style="left:894px;top:1094px;width:502px;height:74px;border:6px solid #7b80ee;background:#fdfdfd"></div>
<div class="t" style="left:907px;top:1114.6px;font-size:27.6px;color:#222;font-weight:400;">Customer Training</div>
<svg class="abs" style="left:1366px;top:1122px" width="20" height="14" viewBox="0 0 20 14"><path d="M2.5 2.5 L10 10 L17.5 2.5" fill="none" stroke="#7b80ee" stroke-width="2.7"/></svg>
<div class="abs" style="left:2632px;top:292px;width:21px;height:886px;background:#e9e9fb"></div>
<div class="abs" style="left:2633px;top:1073px;width:15px;height:94px;background:#a5a9f2;border-radius:8px"></div>
<div class="abs" style="left:2px;top:1178px;width:2630px;height:16px;background:#e9e9fb"></div>
<div class="abs" style="left:10px;top:1178px;width:1316px;height:12px;background:#a5a9f2;border-radius:6px"></div>
<div class="abs" style="left:6px;top:1092px;width:2647px;height:86px;border:10px solid #fd574b"></div>
<div class="abs" style="left:2px;top:1195px;width:2651px;height:2px;background:#eef0f0"></div>
<div class="abs" style="left:2px;top:1232px;width:2651px;height:2px;background:#eceeee"></div>
<div class="t" style="left:14px;top:1202.0px;font-size:26px;color:#333;font-weight:700;-webkit-text-stroke:0;">Totals</div>
<div class="t" style="left:480px;width:2000px;text-align:center;top:1200.0px;font-size:26px;color:#333;font-weight:700;-webkit-text-stroke:0;">23.38 hrs</div>
<div class="t" style="left:647px;width:2000px;text-align:right;top:1200.0px;font-size:26px;color:#333;font-weight:700;-webkit-text-stroke:0;">22.37 hrs</div>
<div class="abs" style="left:1288px;top:1244px;width:80px;height:80px;border-radius:50%;background:#7b81ed;box-shadow:0 8px 32px rgba(0,0,0,0.42)"></div>
<svg class="abs" style="left:1300px;top:1256px" width="56" height="56" viewBox="0 0 56 56"><path d="M28 7.5 V48.3 M7.7 27.8 H48.3" stroke="#fff" stroke-width="7.4" stroke-linecap="round"/></svg>
<div class="abs" style="left:2274px;top:1244px;width:321px;height:74px;border-radius:37px;background:#6c70de"></div>
<div class="t" style="left:1434px;width:2000px;text-align:center;top:1263.6px;font-size:33.5px;color:#fff;font-weight:400;transform:scaleX(0.93)">OK</div>
</body></html>
